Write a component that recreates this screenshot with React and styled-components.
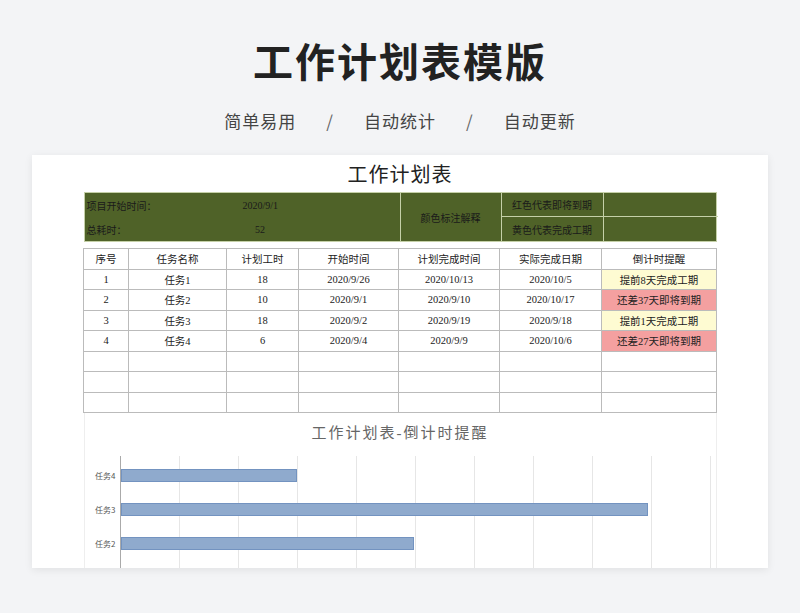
import styled, { createGlobalStyle } from "styled-components";

const Global = createGlobalStyle`
  body { margin: 0; background: #f3f4f6; font-family: "Noto Sans CJK SC", sans-serif; }
`;

const Page = styled.div`
  width: 800px; height: 613px; overflow: hidden;
  display: flex; flex-direction: column; align-items: center;
`;
const Title = styled.h1`
  margin: 34px 0 0; font-size: 40px; font-weight: 700; color: #222; letter-spacing: 2px; line-height: 52px;
`;
const Sub = styled.div`
  margin-top: 22px; font-size: 17px; color: #444; display: flex; gap: 18px; letter-spacing: 1px;
  span.sep { color: #666; margin: 0 12px; }
`;
const Card = styled.div`
  margin-top: 22px; width: 736px; height: 413px; background: #fff;
  box-shadow: 0 2px 8px rgba(0,0,0,0.08); overflow: hidden;
  display: flex; flex-direction: column; align-items: center;
  font-family: "Liberation Serif", "Noto Sans CJK SC", serif;
`;
const SheetTitle = styled.div`
  font-size: 20px; color: #222; height: 37px; line-height: 40px; letter-spacing: 1px;
`;
const Grid = styled.div`
  width: 633px; display: grid;
  grid-template-columns: 45px 98px 72px 100px 101px 102px 115px;
`;
const Info = styled.div`
  width: 633px; display: grid; background: #4f6228;
  grid-template-columns: 315px 101px 102px 115px;
  grid-template-rows: 24px 24px;
  border: 1px solid #c5d0a8; box-sizing: border-box;
  font-size: 10px; color: #1a1a1a;
`;
const InfoLeft = styled.div`
  display: flex; align-items: center; padding-left: 2px;
  b { font-weight: 400; width: 156px; } 
`;
const InfoCell = styled.div`
  display: flex; align-items: center; justify-content: center;
  border-left: 1px solid #c5d0a8; ${p => p.$bottom && "border-bottom: 1px solid #c5d0a8;"}
  ${p => p.$span && "grid-row: span 2;"}
`;
const Table = styled(Grid)`
  margin-top: 6px; border-top: 1px solid #bbb; border-left: 1px solid #bbb;
`;
const Cell = styled.div`
  height: 19.5px; border-right: 1px solid #bbb; border-bottom: 1px solid #bbb;
  display: flex; align-items: center; justify-content: center;
  font-size: 10.5px; color: #222;
  background: ${p => p.$bg || "transparent"};
`;
const Chart = styled.div`
  width: 631px; flex: 1; border-left: 1px solid #eee; border-right: 1px solid #eee;
  display: flex; flex-direction: column;
`;
const ChartTitle = styled.div`
  text-align: center; font-size: 15px; color: #666; letter-spacing: 2px; margin-top: 8px;
`;
const Plot = styled.div`
  position: relative; margin: 14px 0 0 35px; width: 592px; flex: 1;
  border-left: 1px solid #aaa;
  background: repeating-linear-gradient(90deg, transparent 0 58px, #e6e6e6 58px 59px);
`;
const Row = styled.div`
  height: 34px; display: flex; align-items: center; position: relative;
  &:first-child { margin-top: 2px; }
`;
const Label = styled.span`
  position: absolute; right: calc(100% + 5px); font-size: 8px; color: #555;
  font-family: "Noto Sans CJK SC", sans-serif; white-space: nowrap;
`;
const Bar = styled.div`
  height: 13px; background: #8faacd; border: 1px solid #7393c0; box-sizing: border-box;
`;

const rows = [
  ["1", "任务1", "18", "2020/9/26", "2020/10/13", "2020/10/5", "提前8天完成工期", "#fefbd2"],
  ["2", "任务2", "10", "2020/9/1", "2020/9/10", "2020/10/17", "还差37天即将到期", "#f4a0a0"],
  ["3", "任务3", "18", "2020/9/2", "2020/9/19", "2020/9/18", "提前1天完成工期", "#fefbd2"],
  ["4", "任务4", "6", "2020/9/4", "2020/9/9", "2020/10/6", "还差27天即将到期", "#f4a0a0"],
];
const heads = ["序号", "任务名称", "计划工时", "开始时间", "计划完成时间", "实际完成日期", "倒计时提醒"];
const bars = [["任务4", 176], ["任务3", 527], ["任务2", 293]];

export default function App() {
  return (
    <Page>
      <Global />
      <Title>工作计划表模版</Title>
      <Sub>
        <span>简单易用</span><span className="sep">/</span>
        <span>自动统计</span><span className="sep">/</span>
        <span>自动更新</span>
      </Sub>
      <Card>
        <SheetTitle>工作计划表</SheetTitle>
        <Info>
          <InfoLeft><b>项目开始时间：</b>2020/9/1</InfoLeft>
          <InfoCell $span>颜色标注解释</InfoCell>
          <InfoCell $bottom>红色代表即将到期</InfoCell>
          <InfoCell $bottom />
          <InfoLeft><b>总耗时：</b>&nbsp;&nbsp;&nbsp;&nbsp;&nbsp;52</InfoLeft>
          <InfoCell>黄色代表完成工期</InfoCell>
          <InfoCell />
        </Info>
        <Table>
          {heads.map(h => <Cell key={h}>{h}</Cell>)}
          {rows.map(r => r.slice(0, 7).map((v, i) => (
            <Cell key={r[0] + i} $bg={i === 6 ? r[7] : undefined}>{v}</Cell>
          )))}
          {Array.from({ length: 21 }, (_, i) => <Cell key={"e" + i} />)}
        </Table>
        <Chart>
          <ChartTitle>工作计划表-倒计时提醒</ChartTitle>
          <Plot>
            {bars.map(([n, w]) => (
              <Row key={n}><Label>{n}</Label><Bar style={{ width: w }} /></Row>
            ))}
          </Plot>
        </Chart>
      </Card>
    </Page>
  );
}
